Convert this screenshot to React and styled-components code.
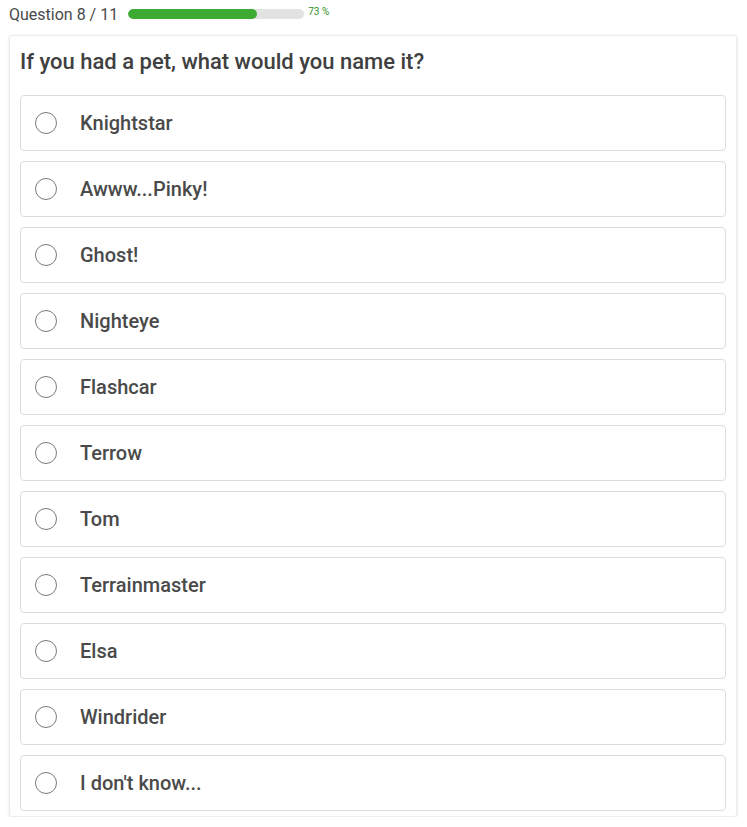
import styled, { createGlobalStyle } from 'styled-components'

const GlobalStyle = createGlobalStyle`
  body {
    margin: 0;
    background: #fff;
    font-family: Roboto, "Liberation Sans", sans-serif;
  }
`

const options = [
  'Knightstar',
  'Awww...Pinky!',
  'Ghost!',
  'Nighteye',
  'Flashcar',
  'Terrow',
  'Tom',
  'Terrainmaster',
  'Elsa',
  'Windrider',
  "I don't know...",
]

export default function App() {
  const current = 8
  const total = 11
  const percent = Math.round((current / total) * 100)
  return (
    <Page>
      <GlobalStyle />
      <Header>
        <Counter>Question {current} / {total}</Counter>
        <Track>
          <Fill style={{ width: `${percent}%` }} />
        </Track>
        <Percent>{percent} %</Percent>
      </Header>
      <Card>
        <Title>If you had a pet, what would you name it?</Title>
        <List>
          {options.map((o) => (
            <Option key={o}>
              <Radio />
              <Label>{o}</Label>
            </Option>
          ))}
        </List>
      </Card>
    </Page>
  )
}

const Page = styled.div`
  padding: 0 10px 0 9px;
`
const Header = styled.div`
  display: flex;
  align-items: center;
  height: 28px;
`
const Counter = styled.span`
  font-size: 16px;
  color: #4a4a4a;
  margin-right: 10px;
`
const Track = styled.div`
  width: 176px;
  height: 10px;
  border-radius: 5px;
  background: #e2e2e2;
  overflow: hidden;
`
const Fill = styled.div`
  height: 100%;
  border-radius: 5px;
  background: #3dab32;
`
const Percent = styled.span`
  font-size: 10px;
  color: #2f8f25;
  margin-left: 4px;
  align-self: flex-start;
  margin-top: 6px;
`
const Card = styled.div`
  margin-top: 7px;
  border: 1px solid #ececec;
  border-radius: 3px;
  box-shadow: 0 1px 3px rgba(0, 0, 0, 0.12);
  padding: 12px 10px 5px 10px;
`
const Title = styled.h2`
  margin: 0 0 19px;
  font-size: 22px;
  font-weight: 500;
  color: #404040;
  line-height: 28px;
`
const List = styled.div`
  display: flex;
  flex-direction: column;
  gap: 10px;
`
const Option = styled.div`
  display: flex;
  align-items: center;
  height: 56px;
  box-sizing: border-box;
  border: 1px solid #dcdcdc;
  border-radius: 4px;
  padding-left: 14px;
`
const Radio = styled.span`
  width: 22px;
  height: 22px;
  box-sizing: border-box;
  border: 1.5px solid #7a7a7a;
  border-radius: 50%;
  flex-shrink: 0;
`
const Label = styled.span`
  margin-left: 23px;
  font-size: 20px;
  font-weight: 500;
  color: #4a4a4a;
`
